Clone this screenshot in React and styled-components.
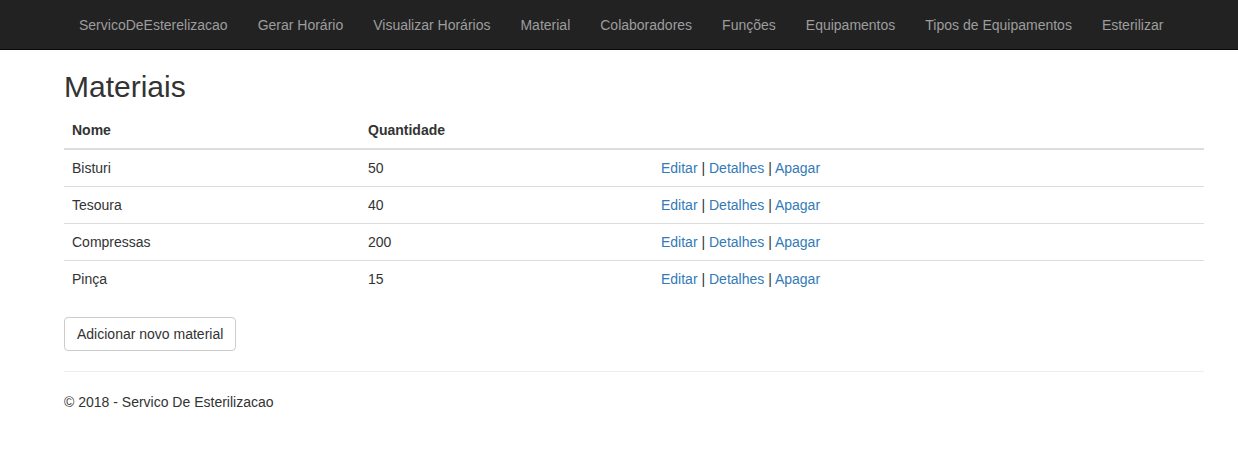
import React from 'react'
import styled, { createGlobalStyle } from 'styled-components'

const GlobalStyle = createGlobalStyle`
  * { box-sizing: border-box; }
  body {
    margin: 0;
    font-family: "Liberation Sans", Arial, Helvetica, sans-serif;
    font-size: 14px;
    line-height: 1.42857143;
    color: #333;
    background-color: #fff;
  }
`

const Navbar = styled.nav`
  height: 50px;
  background-color: #222;
  border-bottom: 1px solid #080808;
`
const NavInner = styled.div`
  display: flex;
  align-items: center;
  padding-left: 64px;
`
const NavLink = styled.a`
  display: block;
  padding: 15px;
  line-height: 20px;
  font-size: 14px;
  color: #9d9d9d;
  text-decoration: none;
  white-space: nowrap;
`
const Container = styled.div`
  width: 1140px;
  margin-left: 64px;
`
const Title = styled.h2`
  margin: 20px 0 9px;
  font-size: 30px;
  font-weight: 500;
  line-height: 1.1;
`
const Table = styled.table`
  width: 100%;
  border-collapse: collapse;
  border-spacing: 0;
  margin-bottom: 20px;
`
const Th = styled.th`
  padding: 8px;
  text-align: left;
  font-weight: bold;
  line-height: 1.42857143;
  border-bottom: 2px solid #ddd;
  width: ${(p) => p.w || 'auto'};
`
const Td = styled.td`
  padding: 8px;
  line-height: 1.42857143;
  border-top: ${(p) => (p.first ? 'none' : '1px solid #ddd')};
`
const Link = styled.a`
  color: #337ab7;
  text-decoration: none;
`
const Para = styled.p`
  margin: 0 0 10px;
`
const Button = styled.a`
  display: inline-block;
  padding: 6px 12px;
  font-size: 14px;
  line-height: 1.42857143;
  color: #333;
  background-color: #fff;
  border: 1px solid #ccc;
  border-radius: 4px;
  text-decoration: none;
`
const Rule = styled.hr`
  margin: 20px 0;
  border: 0;
  border-top: 1px solid #eee;
`

const nav = [
  'ServicoDeEsterelizacao',
  'Gerar Horário',
  'Visualizar Horários',
  'Material',
  'Colaboradores',
  'Funções',
  'Equipamentos',
  'Tipos de Equipamentos',
  'Esterilizar',
]

const rows = [
  ['Bisturi', 50],
  ['Tesoura', 40],
  ['Compressas', 200],
  ['Pinça', 15],
]

export default function App() {
  return (
    <>
      <GlobalStyle />
      <Navbar>
        <NavInner>
          {nav.map((n) => (
            <NavLink key={n} href="#">
              {n}
            </NavLink>
          ))}
        </NavInner>
      </Navbar>
      <Container>
        <Title>Materiais</Title>
        <Table>
          <thead>
            <tr>
              <Th w="296px">Nome</Th>
              <Th w="293px">Quantidade</Th>
              <Th />
            </tr>
          </thead>
          <tbody>
            {rows.map(([name, qty], i) => (
              <tr key={name}>
                <Td first={i === 0 ? 1 : 0}>{name}</Td>
                <Td first={i === 0 ? 1 : 0}>{qty}</Td>
                <Td first={i === 0 ? 1 : 0}>
                  <Link href="#">Editar</Link> | <Link href="#">Detalhes</Link> |{' '}
                  <Link href="#">Apagar</Link>
                </Td>
              </tr>
            ))}
          </tbody>
        </Table>
        <Para>
          <Button href="#">Adicionar novo material</Button>
        </Para>
        <Rule />
        <footer>
          <Para>© 2018 - Servico De Esterilizacao</Para>
        </footer>
      </Container>
    </>
  )
}
